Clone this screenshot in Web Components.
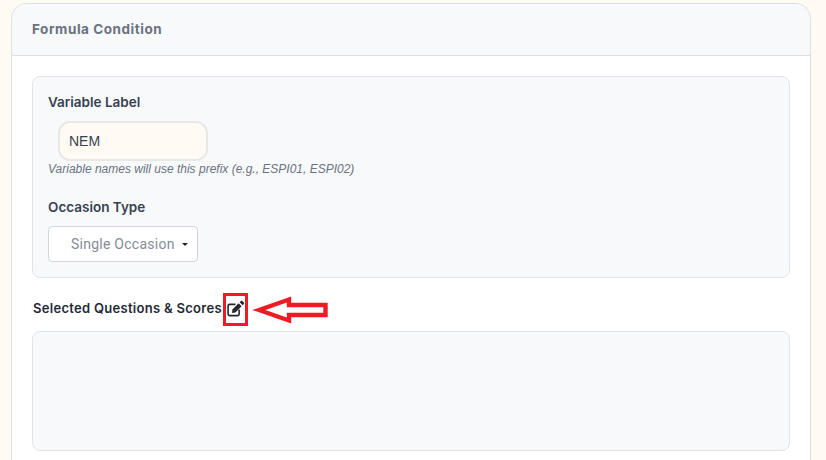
<!DOCTYPE html>
<html>
<head>
<meta charset="utf-8">
<style>
  html, body { margin: 0; height: 100%; overflow: hidden; background: #fffbf4; }
  body { padding: 3px 15px 0 11px; box-sizing: border-box; font-family: Inter, "Liberation Sans", sans-serif; }
</style>
</head>
<body>
<formula-card>
  <span slot="title">Formula Condition</span>
  <form-panel>
    <field-label>Variable Label</field-label>
    <text-box value="NEM"></text-box>
    <p>Variable names will use this prefix (e.g., ESPI01, ESPI02)</p>
    <field-label class="second">Occasion Type</field-label>
    <select-box>Single Occasion</select-box>
  </form-panel>
  <questions-head>Selected Questions &amp; Scores</questions-head>
  <empty-box></empty-box>
</formula-card>

<script>
class FormulaCard extends HTMLElement {
  constructor() {
    super();
    this.attachShadow({ mode: "open" }).innerHTML = `
    <style>
      :host { display: block; height: 100%; box-sizing: border-box; background: #fff; border: 1px solid #dedfe0; border-bottom: none; border-radius: 16px 16px 0 0; overflow: hidden; }
      .hdr { height: 52px; box-sizing: border-box; background: #f8f9fb; border-bottom: 1px solid #dedfe0; padding: 0 20px 2px; display: flex; align-items: center; font-size: 13.5px; font-weight: 700; color: #6b7280; letter-spacing: 0.55px; }
      .bdy { padding: 20px 20px 0 20px; }
    </style>
    <div class="hdr"><slot name="title"></slot></div>
    <div class="bdy"><slot></slot></div>`;
  }
}

class FormPanel extends HTMLElement {
  constructor() {
    super();
    this.attachShadow({ mode: "open" }).innerHTML = `
    <style>
      :host { display: block; height: 202px; box-sizing: border-box; background: #f8f9fb; border: 1px solid #e2e4e8; border-radius: 8px; padding: 15px; }
      ::slotted(p) { margin: 0; height: 16px; line-height: 16px; font-size: 12px; font-style: italic; color: #6b7280; font-family: "Liberation Sans", sans-serif; }
      ::slotted(.second) { margin-top: 20px; }
    </style>
    <slot></slot>`;
  }
}

class FieldLabel extends HTMLElement {
  constructor() {
    super();
    this.attachShadow({ mode: "open" }).innerHTML = `
    <style>
      :host { display: block; height: 20px; line-height: 20px; font-size: 13.5px; font-weight: 600; color: #374151; }
    </style>
    <slot></slot>`;
  }
}

class TextBox extends HTMLElement {
  constructor() {
    super();
    this.attachShadow({ mode: "open" }).innerHTML = `
    <style>
      :host { display: block; margin: 9px 0 0 10px; width: 150px; height: 40px; box-sizing: border-box; background: #fffbf4; border: 2px solid #e8e8e6; border-radius: 12px; padding: 0 9px; line-height: 36px; font-size: 14px; color: #374151; font-family: "Liberation Sans", sans-serif; }
    </style>
    <span>${this.getAttribute("value")}</span>`;
  }
}

class SelectBox extends HTMLElement {
  constructor() {
    super();
    this.attachShadow({ mode: "open" }).innerHTML = `
    <style>
      :host { display: flex; align-items: center; margin-top: 9px; width: 150px; height: 36px; box-sizing: border-box; background: #fff; border: 1px solid #d1d5db; border-radius: 4px; padding: 0 9px 0 22px; font-size: 14px; color: #868c97; font-family: Roboto, sans-serif; }
      .txt { flex: 1; white-space: nowrap; letter-spacing: 0.25px; }
      .caret { width: 0; height: 0; border-left: 3px solid transparent; border-right: 3px solid transparent; border-top: 3px solid #222; }
    </style>
    <span class="txt"><slot></slot></span><span class="caret"></span>`;
  }
}

class QuestionsHead extends HTMLElement {
  constructor() {
    super();
    this.attachShadow({ mode: "open" }).innerHTML = `
    <style>
      :host { display: flex; align-items: center; position: relative; box-sizing: border-box; height: 53px; padding: 7px 0 0 1px; font-size: 13px; font-weight: 600; color: #1f2937; letter-spacing: 0.29px; }
      .pen { margin-left: 5px; width: 17px; height: 17px; display: block; }
      .mark { position: absolute; left: 191px; top: 15px; width: 25px; height: 33px; box-sizing: border-box; border: 3px solid #ed1c24; }
      .arrow { position: absolute; left: 218px; top: 17px; width: 78px; height: 30px; overflow: visible; }
    </style>
    <span><slot></slot></span>
    <svg class="pen" viewBox="0 0 17 17">
      <path d="M8.5 4.4H2.6A1.5 1.5 0 0 0 1.1 5.9v8.2a1.5 1.5 0 0 0 1.5 1.5h8a1.5 1.5 0 0 0 1.5-1.5V9.6" fill="none" stroke="#24272c" stroke-width="1.6"/>
      <path d="M5.4 9.4 11.6 3.2 14.6 6.2 8.4 12.4 5 12.9Z" fill="#24272c"/>
      <path d="M12.6 2.2 13.9.9a1 1 0 0 1 1.4 0l1.6 1.6a1 1 0 0 1 0 1.4L15.6 5.2Z" fill="#24272c"/>
    </svg>
    <span class="mark"></span>
    <svg class="arrow" viewBox="0 0 78 30">
      <path d="M9 15 39 4.5V10H75.5V20H39V25.5Z" fill="#fff" stroke="#ed1c24" stroke-width="4.4" stroke-linejoin="miter"/>
    </svg>`;
  }
}

class EmptyBox extends HTMLElement {
  constructor() {
    super();
    this.attachShadow({ mode: "open" }).innerHTML = `
    <style>
      :host { display: block; height: 120px; box-sizing: border-box; background: #f8f9fb; border: 1px solid #e2e4e8; border-radius: 8px; }
    </style>`;
  }
}

customElements.define("formula-card", FormulaCard);
customElements.define("form-panel", FormPanel);
customElements.define("field-label", FieldLabel);
customElements.define("text-box", TextBox);
customElements.define("select-box", SelectBox);
customElements.define("questions-head", QuestionsHead);
customElements.define("empty-box", EmptyBox);
</script>
</body>
</html>
